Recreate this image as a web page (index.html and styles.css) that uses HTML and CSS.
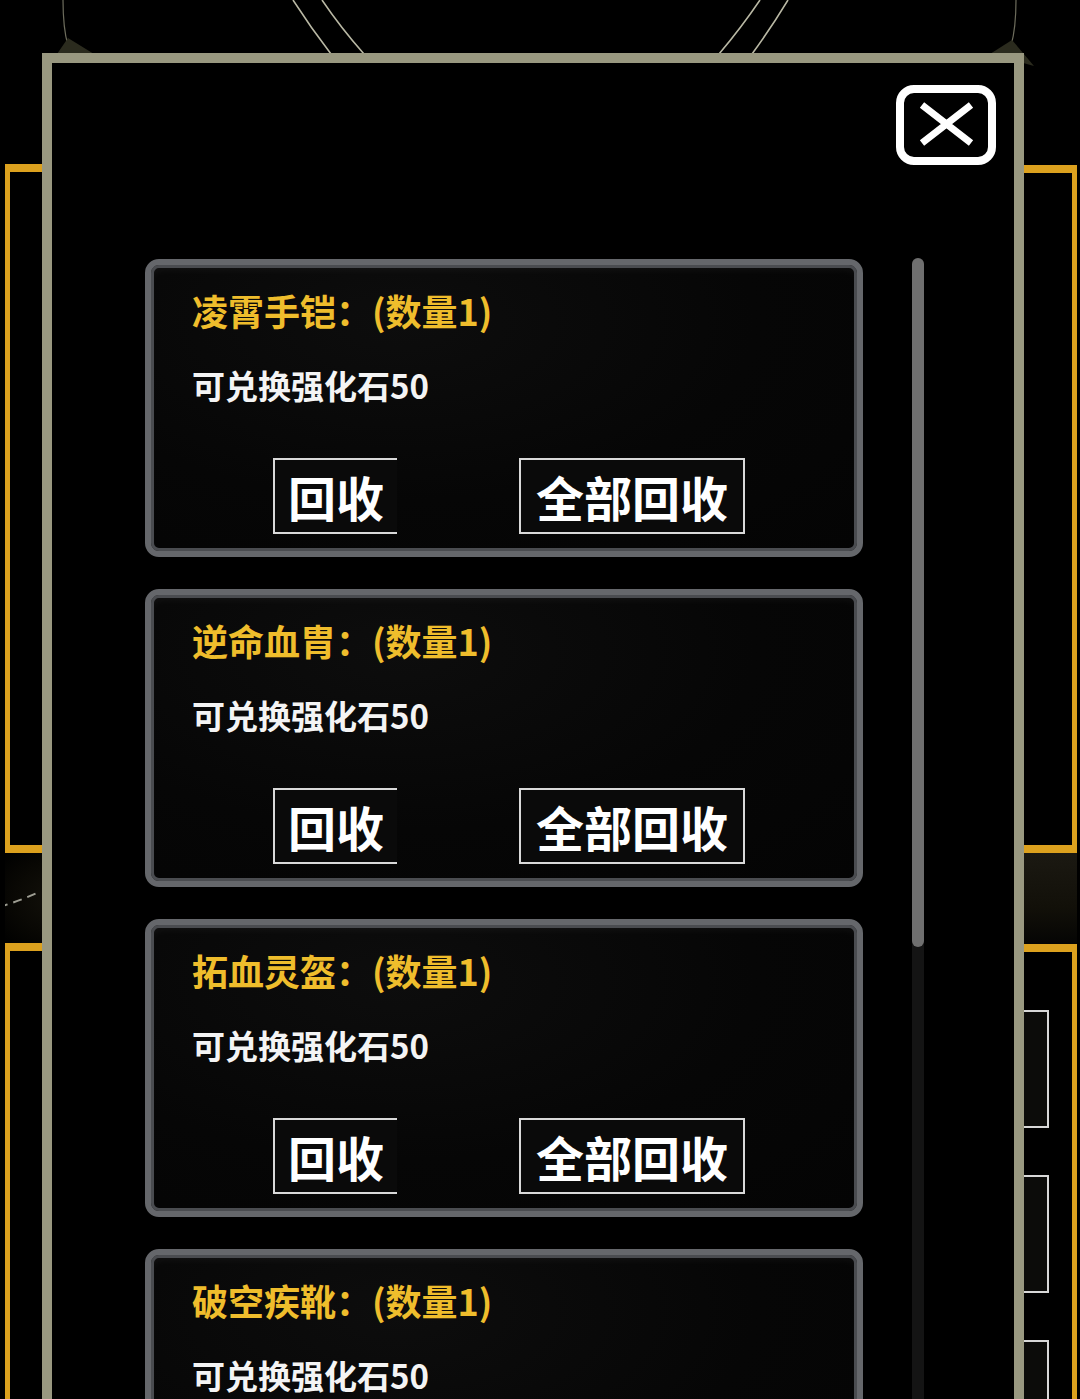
FILE: index.html
```html
<!DOCTYPE html>
<html lang="zh-CN">
<head>
<meta charset="utf-8">
<title>回收</title>
<link rel="stylesheet" href="styles.css">
</head>
<body>
<div class="scene">
  <div class="backdrop">
    <svg class="top-art" width="1080" height="163" viewBox="0 0 1080 163">
      <path d="M293,0 Q311,28 331,54" class="art-line"/>
      <path d="M322,0 Q341,28 364,54" class="art-line"/>
      <path d="M760,0 Q741,28 719,54" class="art-line"/>
      <path d="M788,0 Q771,28 752,54" class="art-line"/>
      <path d="M63,0 Q63,28 68,46" class="art-line faint"/>
      <polygon points="57,54 68,38 94,54" class="art-flare"/>
      <path d="M1016,0 Q1016,28 1011,46" class="art-line faint"/>
      <polygon points="990,54 1012,40 1034,66" class="art-flare"/>
    </svg>
    <div class="side-frames">
      <div class="side side-left">
        <div class="frame frame-upper"></div>
        <div class="gap-zone">
          <svg width="100" height="90" viewBox="0 0 100 90">
            <path d="M-6,54 Q15,48 36,38" class="dash"/>
          </svg>
        </div>
        <div class="frame frame-lower"></div>
      </div>
      <div class="side side-right">
        <div class="frame frame-upper"></div>
        <div class="gap-zone gap-right"></div>
        <div class="frame frame-lower">
          <div class="slot"></div>
          <div class="slot"></div>
          <div class="slot"></div>
        </div>
      </div>
    </div>
  </div>

  <div class="modal">
    <div class="modal-head">
      <div class="close">
        <svg width="84" height="64" viewBox="0 0 84 64">
          <path d="M18,12 L67,50 M67,12 L18,50" class="x-mark"/>
        </svg>
      </div>
    </div>
    <div class="modal-body">
      <div class="list">
        <div class="card">
          <div class="card-title">凌霄手铠：(数量1)</div>
          <div class="card-sub">可兑换强化石50</div>
          <div class="card-actions">
            <div class="btn btn-single">回收</div>
            <div class="btn btn-all">全部回收</div>
          </div>
        </div>
        <div class="card">
          <div class="card-title">逆命血胄：(数量1)</div>
          <div class="card-sub">可兑换强化石50</div>
          <div class="card-actions">
            <div class="btn btn-single">回收</div>
            <div class="btn btn-all">全部回收</div>
          </div>
        </div>
        <div class="card">
          <div class="card-title">拓血灵盔：(数量1)</div>
          <div class="card-sub">可兑换强化石50</div>
          <div class="card-actions">
            <div class="btn btn-single">回收</div>
            <div class="btn btn-all">全部回收</div>
          </div>
        </div>
        <div class="card">
          <div class="card-title">破空疾靴：(数量1)</div>
          <div class="card-sub">可兑换强化石50</div>
          <div class="card-actions">
            <div class="btn btn-single">回收</div>
            <div class="btn btn-all">全部回收</div>
          </div>
        </div>
      </div>
      <div class="scrollbar">
        <div class="thumb"></div>
      </div>
    </div>
  </div>
</div>
</body>
</html>
```

FILE: styles.css
```css
html, body {
  margin: 0;
  padding: 0;
  background: #000;
}

body {
  font-family: "Noto Sans CJK SC", "Noto Sans", sans-serif;
  color: #fff;
}

.scene {
  position: relative;
  width: 1080px;
  height: 1399px;
  overflow: hidden;
  background: #000;
}

/* ---------- backdrop ---------- */
.backdrop {
  display: flex;
  flex-direction: column;
}

.top-art {
  display: block;
  margin-bottom: 1px;
}

.art-line {
  fill: none;
  stroke: #b9b8a4;
  stroke-width: 1.6;
}

.art-line.faint {
  stroke: #6d6c5c;
  stroke-width: 1.2;
}

.art-flare {
  fill: #2b2b1e;
}

.side-frames {
  display: flex;
  justify-content: space-between;
}

.side {
  width: 100px;
  display: flex;
  flex-direction: column;
}

.side-left {
  margin-left: 5px;
}

.side-right {
  margin-right: 3px;
  margin-top: 1px;
}

.frame {
  box-sizing: border-box;
  border-top: 8px solid #dca11e;
  border-bottom: 8px solid #dca11e;
}

.side-left .frame {
  border-left: 5px solid #dca11e;
}

.side-right .frame {
  border-right: 5px solid #dca11e;
}

.frame-upper {
  height: 689px;
}

.side-right .frame-upper {
  height: 688px;
}

.frame-lower {
  height: 600px;
  display: flex;
  flex-direction: column;
  align-items: flex-end;
  padding-top: 58px;
  gap: 47px;
}

.gap-zone {
  height: 90px;
  background: radial-gradient(ellipse at 60% 50%, #15130c 0%, #090804 60%, #000 100%);
}

.gap-zone svg {
  display: block;
}

.gap-right {
  height: 91px;
  background: linear-gradient(180deg, #1b1912 0%, #121009 60%, #050504 100%);
}

.dash {
  fill: none;
  stroke: #9d9d92;
  stroke-width: 2;
  stroke-dasharray: 9 6;
}

.slot {
  width: 76px;
  height: 118px;
  box-sizing: border-box;
  margin-right: 23px;
  border: 2px solid #d8d8d8;
  background: #0c0c0a;
}

/* ---------- modal ---------- */
.modal {
  position: absolute;
  left: 42px;
  top: 53px;
  width: 982px;
  height: 1420px;
  box-sizing: border-box;
  border: 10px solid #999880;
  background: #000;
  display: flex;
  flex-direction: column;
  box-shadow: inset 0 2px 3px rgba(0, 0, 0, 0.9);
}

.modal-head {
  display: flex;
  justify-content: flex-end;
  padding: 22px 18px 0 0;
}

.close {
  width: 100px;
  height: 80px;
  box-sizing: border-box;
  border: 8px solid #fff;
  border-radius: 18px;
  display: flex;
  align-items: center;
  justify-content: center;
}

.close svg {
  display: block;
}

.x-mark {
  fill: none;
  stroke: #fff;
  stroke-width: 7;
}

.modal-body {
  display: flex;
  gap: 49px;
  margin-top: 93px;
  padding-left: 93px;
  flex: 1;
  min-height: 0;
  overflow: hidden;
}

.list {
  width: 718px;
  display: flex;
  flex-direction: column;
  gap: 32px;
  padding-top: 1px;
  flex-shrink: 0;
}

.card {
  height: 298px;
  flex-shrink: 0;
  box-sizing: border-box;
  border: 6px solid #65676b;
  border-radius: 14px;
  background: radial-gradient(ellipse at 35% 20%, #0d0d0d 0%, #060606 55%, #040404 100%);
  box-shadow: inset 0 0 0 3px #4a4c50, inset 0 5px 8px rgba(255, 255, 255, 0.05);
  padding: 26px 33px 17px 41px;
  display: flex;
  flex-direction: column;
}

.card-title {
  margin-top: -3px;
  font-size: 36px;
  line-height: 44px;
  font-weight: 700;
  color: #efbd2c;
  white-space: nowrap;
}

.card-sub {
  margin-top: 33px;
  font-size: 33px;
  line-height: 40px;
  font-weight: 700;
  color: #f4f4f4;
  white-space: nowrap;
}

.card-actions {
  margin-top: 53px;
  display: flex;
  gap: 122px;
  padding-left: 81px;
}

.btn {
  height: 76px;
  box-sizing: border-box;
  border: 2px solid #d9d9d9;
  background: #0a0a0a;
  color: #fff;
  font-size: 48px;
  line-height: 1;
  font-weight: 700;
  display: flex;
  align-items: center;
  justify-content: center;
  white-space: nowrap;
}

.btn-single {
  width: 124px;
  border-right: none;
}

.btn-all {
  width: 226px;
}

.scrollbar {
  width: 12px;
  flex-shrink: 0;
  background: #141414;
  border-radius: 6px;
  display: flex;
  flex-direction: column;
}

.thumb {
  height: 689px;
  background: #6f6f6f;
  border-radius: 6px;
}
```
